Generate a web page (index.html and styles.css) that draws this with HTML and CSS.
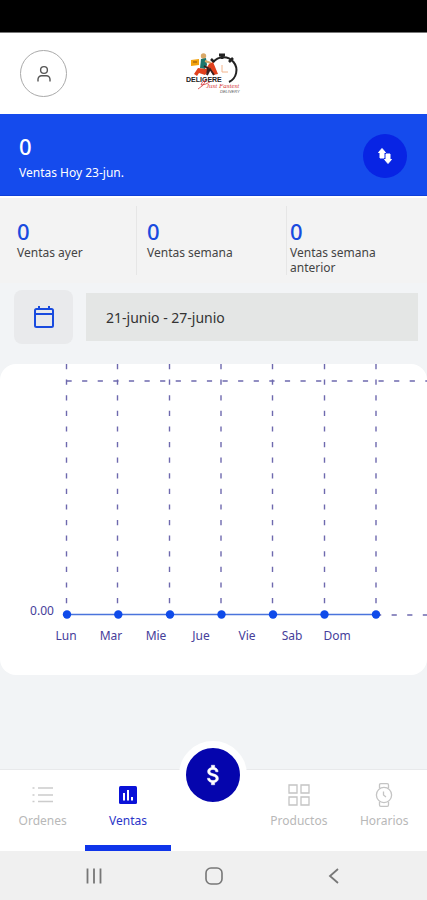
FILE: index.html
```html
<!DOCTYPE html>
<html lang="es">
<head>
<meta charset="utf-8">
<meta name="viewport" content="width=device-width, initial-scale=1">
<title>Ventas</title>
<link rel="stylesheet" href="styles.css">
</head>
<body>
<div class="status-bar"></div>

<header class="header">
  <button class="profile" aria-label="Perfil">
    <svg width="16" height="18" viewBox="0 0 16 18" fill="none" stroke="#555" stroke-width="1.4">
      <circle cx="8" cy="5" r="3.4"/>
      <path d="M2 16.5v-2.2a3.6 3.6 0 0 1 3.6-3.6h4.8a3.6 3.6 0 0 1 3.6 3.6v2.2"/>
    </svg>
  </button>
  <svg class="logo" width="56" height="42" viewBox="0 0 56 42" role="img">
    <g fill="none" stroke="#222">
      <path d="M27 9.500A13 13 0 1 1 43 29" stroke-width="2"/>
      <path d="M33 2h6M36 2v4" stroke-width="3"/>
      <path d="M25 6l3 3M43 9l4-4" stroke-width="2.600"/>
    </g>
    <path d="M36 12v7h6" fill="none" stroke="#f2b48c"/>
    <path d="M5 7l8-1v6l-8 1z" fill="#f2a20d"/>
    <path d="M7 9h4" stroke="#8b4c0b"/>
    <circle cx="17.500" cy="3" r="2.700" fill="#d9a867"/>
    <path d="M15 6l5-1 1 7-2 4-5-1z" fill="#1c766c"/>
    <path d="M19 8l6 2" stroke="#d9a867" stroke-width="2"/>
    <path d="M8 21l4-6 8 1 3-5 4-2 5 12-5 1-3-6-5 6-6-2-2 3z" fill="#e0401c"/>
    <path d="M18 13l4 2-1 7 3-6 4 6" fill="none" stroke="#392020" stroke-width="1.800"/>
    <text class="logo-name" x="0" y="29">DELIGERE</text>
    <path d="M12 36q6-3 8-9-5 2-5 5 4 0 9-3" fill="none" stroke="#d63a3a" stroke-width=".8"/>
    <text class="logo-script" x="20" y="35">Just Fastest</text>
    <text class="logo-sub" x="34" y="40">DELIVERY</text>
  </svg>
</header>

<main>
  <section class="today">
    <div>
      <div class="number">0</div>
      <div class="caption">Ventas Hoy 23-jun.</div>
    </div>
    <button class="swap" aria-label="Cambiar">
      <svg width="16" height="18" viewBox="0 0 16 18" fill="#fff" stroke="#fff" stroke-linejoin="round">
        <path d="M5 1.500l3.500 4H7v5.500H3V5.500H1.500z"/>
        <path d="M11 16.500l-3.500-4H9V7h4v5.500h1.500z"/>
      </svg>
    </button>
  </section>

  <section class="stats">
    <div class="stat"><div class="number">0</div><div class="caption">Ventas ayer</div></div>
    <div class="stat"><div class="number">0</div><div class="caption">Ventas semana</div></div>
    <div class="stat"><div class="number">0</div><div class="caption">Ventas semana anterior</div></div>
  </section>

  <section class="dates">
    <button class="calendar" aria-label="Elegir fechas">
      <svg width="20" height="22" viewBox="0 0 20 22" fill="none" stroke="#194bdf" stroke-width="2">
        <rect x="1" y="3" width="18" height="18" rx="1.500"/>
        <path d="M1 8h18M5 0v3M15 0v3"/>
      </svg>
    </button>
    <input class="range" type="text" value="21-junio - 27-junio" aria-label="Rango de fechas" readonly>
  </section>

  <section class="card">
    <svg class="chart" viewBox="0 0 427 311" role="img" aria-label="Ventas por día">
      <g class="grid">
        <path d="M66.500 0V250M117.500 0V250M169.500 0V250M221 0V250M272.500 0V250M324.500 0V250M376 0V250"/>
        <path d="M66.500 17H427M376 251H427"/>
      </g>
      <path class="line" d="M67 250.500H376"/>
      <g class="dots">
        <circle cx="67" cy="250.500" r="4.200"/>
        <circle cx="118.300" cy="250.500" r="4.200"/>
        <circle cx="170" cy="250.500" r="4.200"/>
        <circle cx="221.500" cy="250.500" r="4.200"/>
        <circle cx="273" cy="250.500" r="4.200"/>
        <circle cx="324.500" cy="250.500" r="4.200"/>
        <circle cx="376" cy="250.500" r="4.200"/>
      </g>
      <g class="labels">
        <text x="42" y="251">0.00</text>
        <text x="66" y="276">Lun</text>
        <text x="111" y="276">Mar</text>
        <text x="156" y="276">Mie</text>
        <text x="201" y="276">Jue</text>
        <text x="247" y="276">Vie</text>
        <text x="292" y="276">Sab</text>
        <text x="337" y="276">Dom</text>
      </g>
    </svg>
  </section>
</main>

<nav class="tabs">
  <a class="tab" href="#ordenes">
    <svg width="24" height="24" viewBox="0 0 24 24" stroke="#ccc" stroke-width="1.500">
      <path d="M7 5h15M7 12h15M7 18.500h15M1.500 5h2M1.500 12h2M1.500 18.500h2"/>
    </svg>
    <span>Ordenes</span>
  </a>
  <a class="tab active" href="#ventas">
    <svg width="24" height="24" viewBox="0 0 24 24">
      <rect x="3" y="3" width="18" height="18" rx="1.500" fill="#0a12d8"/>
      <path d="M8 10v7.500M12 7v10.500M16 14v3.500" stroke="#fff" stroke-width="2"/>
    </svg>
    <span>Ventas</span>
  </a>
  <div class="center">
    <button class="pay" aria-label="Cobrar">
      <svg width="26" height="26" viewBox="0 0 24 24" fill="#fff" stroke="#fff" stroke-width=".5">
        <path d="M12.300 10.900c-2.270-.59-3-1.200-3-2.150 0-1.090 1.010-1.850 2.700-1.850 1.780 0 2.440.85 2.500 2.100h2.210c-.07-1.720-1.120-3.300-3.210-3.810V3h-3v2.160c-1.940.42-3.500 1.680-3.500 3.610 0 2.310 1.910 3.460 4.700 4.130 2.500.6 3 1.480 3 2.410 0 .69-.49 1.790-2.700 1.790-2.060 0-2.870-.92-2.980-2.100h-2.200c.12 2.190 1.760 3.420 3.680 3.830V21h3v-2.150c1.950-.37 3.500-1.500 3.500-3.550 0-2.840-2.430-3.810-4.700-4.400z"/>
      </svg>
    </button>
  </div>
  <a class="tab" href="#productos">
    <svg width="24" height="24" viewBox="0 0 24 24" fill="none" stroke="#c4c4c4" stroke-width="1.300">
      <path d="M2 2h8v8H2zM14 2h8v8h-8zM2 14h8v8H2zM14 14h8v8h-8z"/>
    </svg>
    <span>Productos</span>
  </a>
  <a class="tab" href="#horarios">
    <svg width="24" height="24" viewBox="0 0 24 24" fill="none" stroke="#c4c4c4" stroke-width="1.300">
      <circle cx="12" cy="12" r="7.600"/>
      <path d="M7.500 5.500V2q0-1.300 1.300-1.300h6.400q1.300 0 1.300 1.300v3.500M7.500 18.500V22q0 1.300 1.300 1.300h6.400q1.300 0 1.300-1.300v-3.500M11.500 8.500V12l2.500 2"/>
    </svg>
    <span>Horarios</span>
  </a>
</nav>

<footer class="system">
  <button aria-label="Recientes">
    <svg width="20" height="20" viewBox="0 0 20 20" stroke="#777" stroke-width="1.800"><path d="M3.500 2.500v15M10 2.500v15M16.500 2.500v15"/></svg>
  </button>
  <button aria-label="Inicio">
    <svg width="20" height="20" viewBox="0 0 20 20" fill="none" stroke="#777" stroke-width="1.600"><rect x="2" y="2" width="16" height="16" rx="5"/></svg>
  </button>
  <button aria-label="Atrás">
    <svg width="20" height="20" viewBox="0 0 20 20" fill="none" stroke="#777" stroke-width="1.800"><path d="M14 3l-8 7 8 7"/></svg>
  </button>
</footer>
</body>
</html>
```
FILE: styles.css
```css
* {
  box-sizing: border-box;
}

body {
  margin: 0;
  min-height: 100vh;
  display: flex;
  flex-direction: column;
  background: #f2f4f6;
  color: #444;
  font-family: "Noto Sans", sans-serif;
  font-size: 12px;
  line-height: 16px;
}

button {
  padding: 0;
  border: 0;
  background: none;
  display: flex;
  align-items: center;
  justify-content: center;
}

svg {
  display: block;
}

main {
  flex: 1;
}

.status-bar {
  height: 33px;
  background: #000;
  border-bottom: 1px solid #777;
}

.header {
  display: grid;
  grid-template-columns: 1fr auto 1fr;
  align-items: center;
  height: 81px;
  padding: 0 20px;
  background: #fff;
}

.profile {
  width: 47px;
  height: 47px;
  border: 1px solid #aaa;
  border-radius: 50%;
}

.logo-name {
  font: 700 7px "Liberation Sans", sans-serif;
  fill: #222;
}

.logo-script {
  font: italic 7px "Liberation Serif", serif;
  fill: #d63a3a;
}

.logo-sub {
  font: italic 4px "Liberation Sans", sans-serif;
  fill: #555;
}

.today {
  display: flex;
  align-items: center;
  justify-content: space-between;
  height: 82px;
  padding: 3px 20px 0 19px;
  background: #154bed;
  border-bottom: 1px solid #0f3fd8;
  color: #fff;
}

.number {
  font-size: 22px;
  line-height: 28px;
  font-weight: 500;
}

.today .caption {
  padding-top: 5px;
}

.swap {
  width: 44px;
  height: 44px;
  border-radius: 50%;
  background: #0824e4;
}

.stats {
  display: grid;
  grid-template-columns: 136fr 150fr 141fr;
  padding: 8px 0 8px;
  background: #f3f3f3;
  border-top: 2px solid #fff;
}

.stat {
  padding: 11px 8px 0 10px;
  border-left: 1px solid #e6e6e6;
}

.stat:first-child {
  padding-left: 17px;
  border-left: 0;
}

.stat:last-child {
  padding-left: 3px;
}

.stat .number {
  color: #194bdf;
}

.stat .caption {
  line-height: 15px;
}

.dates {
  display: flex;
  align-items: center;
  gap: 13px;
  padding: 7px 9px 20px 14px;
}

.calendar {
  width: 59px;
  height: 54px;
  border-radius: 8px;
  background: #e9eaec;
}

.range {
  flex: 1;
  min-width: 0;
  height: 48px;
  padding: 0 20px;
  border: 0;
  background: #e4e6e5;
  color: #333;
  font: 14px "Noto Sans", sans-serif;
}

.card {
  overflow: hidden;
  border-radius: 16px;
  background: #fff;
}

.chart {
  width: 100%;
}

.grid {
  fill: none;
  stroke: #6e69ae;
  stroke-width: 1.4;
  stroke-dasharray: 5.2 10.4;
}

.line {
  stroke: #4a74dc;
  stroke-width: 1.6;
}

.dots {
  fill: #0f4bea;
}

.labels {
  fill: #46409a;
  font-size: 12px;
  text-anchor: middle;
}

.tabs {
  display: grid;
  grid-template-columns: repeat(5, 1fr);
  height: 82px;
  background: #fff;
  border-top: 1px solid #e8e9eb;
}

.tab {
  display: flex;
  flex-direction: column;
  align-items: center;
  gap: 6px;
  padding-top: 13px;
  border-bottom: 6px solid transparent;
  color: #b8b8b8;
  text-decoration: none;
}

.tab.active {
  border-color: #0f35ea;
  color: #2b35c8;
}

.center {
  display: flex;
  justify-content: center;
}

.pay {
  width: 68px;
  height: 68px;
  margin-top: -29px;
  border: 7px solid #fff;
  border-radius: 50%;
  background: #0505ad;
}

.system {
  display: flex;
  justify-content: center;
  align-items: center;
  gap: 100px;
  height: 49px;
  background: #f0f0f0;
}
```
